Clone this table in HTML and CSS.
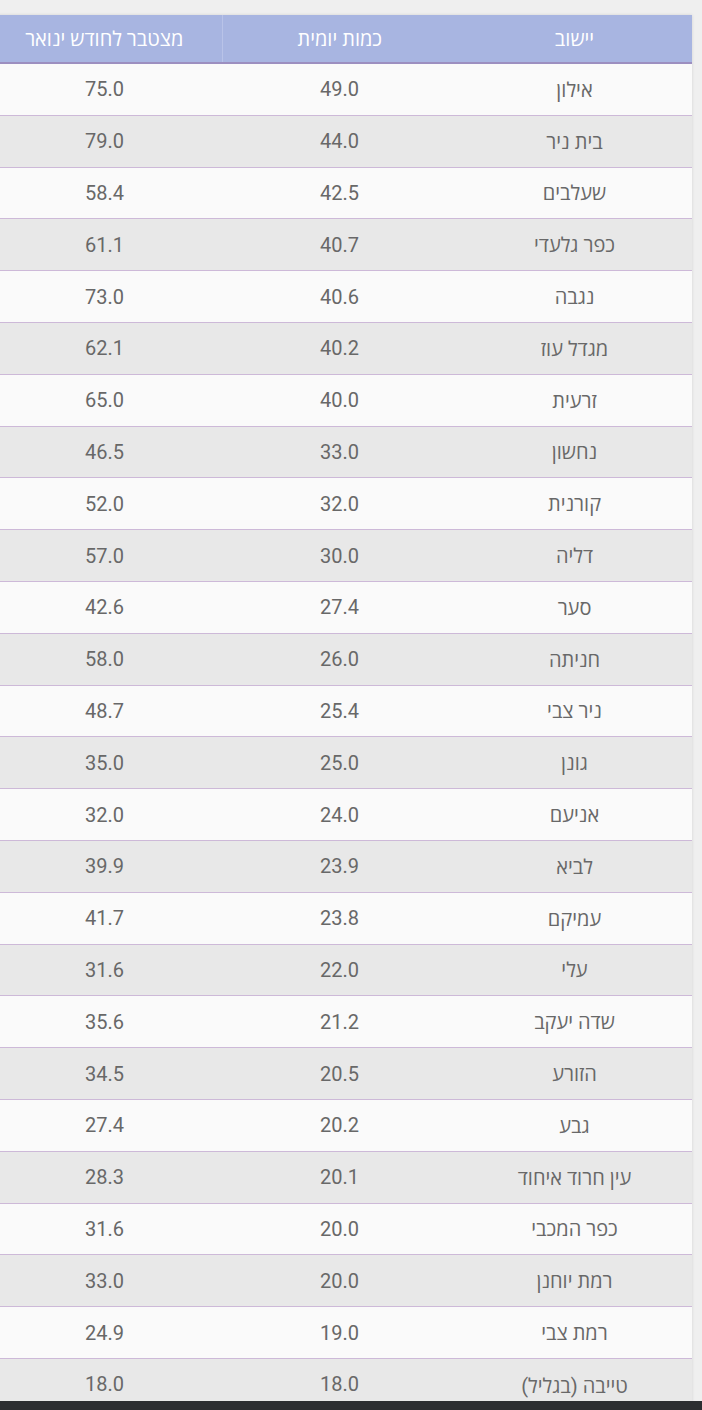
FILE: index.html
```html
<!DOCTYPE html>
<html lang="he" dir="rtl">
<head>
<meta charset="utf-8">
<title>כמויות גשם</title>
<link rel="stylesheet" href="styles.css">
</head>
<body>
<div class="page">
  <table class="rain">
    <thead>
      <tr><th>יישוב</th><th class="mid">כמות יומית</th><th class="last">מצטבר לחודש ינואר</th></tr>
    </thead>
    <tbody>
      <tr><td>אילון</td><td>49.0</td><td>75.0</td></tr>
      <tr><td>בית ניר</td><td>44.0</td><td>79.0</td></tr>
      <tr><td>שעלבים</td><td>42.5</td><td>58.4</td></tr>
      <tr><td>כפר גלעדי</td><td>40.7</td><td>61.1</td></tr>
      <tr><td>נגבה</td><td>40.6</td><td>73.0</td></tr>
      <tr><td>מגדל עוז</td><td>40.2</td><td>62.1</td></tr>
      <tr><td>זרעית</td><td>40.0</td><td>65.0</td></tr>
      <tr><td>נחשון</td><td>33.0</td><td>46.5</td></tr>
      <tr><td>קורנית</td><td>32.0</td><td>52.0</td></tr>
      <tr><td>דליה</td><td>30.0</td><td>57.0</td></tr>
      <tr><td>סער</td><td>27.4</td><td>42.6</td></tr>
      <tr><td>חניתה</td><td>26.0</td><td>58.0</td></tr>
      <tr><td>ניר צבי</td><td>25.4</td><td>48.7</td></tr>
      <tr><td>גונן</td><td>25.0</td><td>35.0</td></tr>
      <tr><td>אניעם</td><td>24.0</td><td>32.0</td></tr>
      <tr><td>לביא</td><td>23.9</td><td>39.9</td></tr>
      <tr><td>עמיקם</td><td>23.8</td><td>41.7</td></tr>
      <tr><td>עלי</td><td>22.0</td><td>31.6</td></tr>
      <tr><td>שדה יעקב</td><td>21.2</td><td>35.6</td></tr>
      <tr><td>הזורע</td><td>20.5</td><td>34.5</td></tr>
      <tr><td>גבע</td><td>20.2</td><td>27.4</td></tr>
      <tr><td>עין חרוד איחוד</td><td>20.1</td><td>28.3</td></tr>
      <tr><td>כפר המכבי</td><td>20.0</td><td>31.6</td></tr>
      <tr><td>רמת יוחנן</td><td>20.0</td><td>33.0</td></tr>
      <tr><td>רמת צבי</td><td>19.0</td><td>24.9</td></tr>
      <tr class="cut"><td>טייבה (בגליל)</td><td>18.0</td><td>18.0</td></tr>
    </tbody>
  </table>
</div>
<div class="navbar"></div>
</body>
</html>
```

FILE: styles.css
```css
html, body {
  margin: 0;
  padding: 0;
}
body {
  background: #efefef;
  font-family: Roboto, "Open Sans", "Noto Sans", sans-serif;
  overflow: hidden;
  height: 1410px;
  position: relative;
}
.page {
  padding-top: 15px;
  padding-right: 10px;
  height: 1386px;
}
.rain {
  width: 705px;
  margin-left: -13px;
  border-collapse: collapse;
  table-layout: fixed;
  direction: rtl;
  box-shadow: 0 0 3px rgba(0, 0, 0, 0.12);
}
.rain th {
  background: #a8b5e1;
  color: #ffffff;
  font-weight: 500;
  font-size: 20px;
  height: 47px;
  padding: 0;
  text-align: center;
  border-bottom: 2px solid #9c8fc0;
}
.rain th.last {
  border-right: 1px solid #b9c3e8;
}
.rain td {
  height: 50.8px;
  padding: 0;
  text-align: center;
  color: #686868;
  font-size: 20px;
  border-bottom: 1px solid #cdb9d8;
}
.rain tbody tr:nth-child(odd) td {
  background: #fafafa;
}
.rain tbody tr:nth-child(even) td {
  background: #e8e8e8;
}
.rain tbody tr.cut td {
  border-bottom: none;
  height: 30px;
  vertical-align: top;
  padding-top: 13px;
}
.navbar {
  position: absolute;
  left: 0;
  right: 0;
  bottom: 0;
  height: 9px;
  background: #2c2e31;
}
```
